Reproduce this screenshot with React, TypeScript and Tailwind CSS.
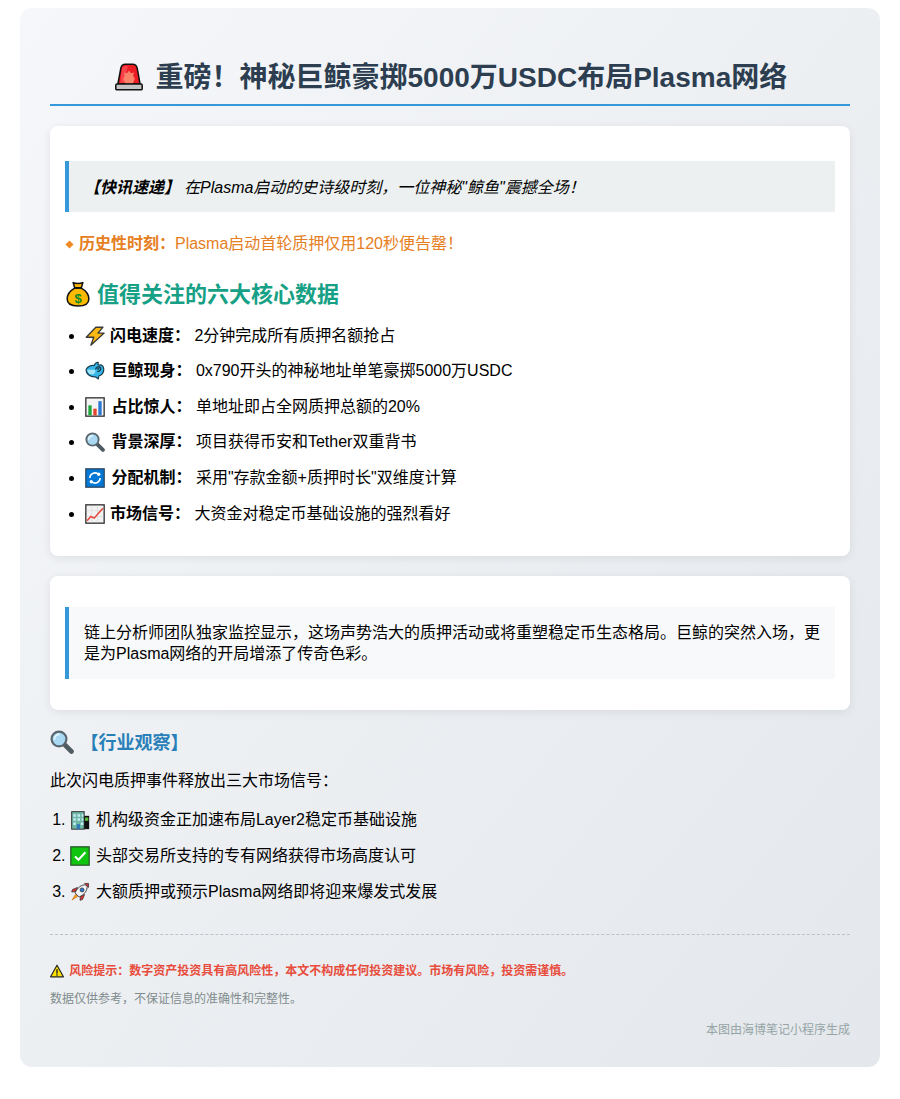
type IconProps = { className: string }

const box = 'inline-block'

function Siren({ className }: IconProps) {
  return (
    <svg viewBox="0 0 24 24" preserveAspectRatio="xMinYMid meet" className={`${box} ${className}`}>
      <path d="M2.5 18 L5 4.5 Q5.5 1 9 1 H15 Q18.5 1 19 4.5 L21.5 18 Z" fill="#ee1c25" stroke="#111" strokeWidth="1.3" />
      <path d="M6 5 Q6.5 2.5 9 2.5 H11 L8 17 H4.5 Z" fill="#f8434b" />
      <path d="M12 6.5 L13.6 8.8 L16.2 8.2 L15.6 11 L17 13.5 L15.3 17.5 H8.7 L7 13.5 L8.4 11 L7.8 8.2 L10.4 8.8 Z" fill="#f9846a" />
      <rect x="0.7" y="18" width="22.6" height="5" rx="1" fill="#c4c4c4" stroke="#111" strokeWidth="1.3" />
    </svg>
  )
}

function MoneyBag({ className }: IconProps) {
  return (
    <svg viewBox="0 0 24 24" preserveAspectRatio="xMinYMid meet" className={`${box} ${className}`}>
      <path d="M7.5 1.5 Q12 3 16.5 1.5 L15 6.5 H9 Z" fill="#f7b500" stroke="#111" strokeWidth="1.4" strokeLinejoin="round" />
      <path d="M9 6.5 H15 C19.5 9 22 13 22 16.5 C22 21 18 23 12 23 C6 23 2 21 2 16.5 C2 13 4.5 9 9 6.5 Z" fill="#fbb900" stroke="#111" strokeWidth="1.4" />
      <rect x="8.5" y="5.6" width="7" height="1.6" fill="#111" />
      <text x="12" y="20" textAnchor="middle" fontSize="12" fontWeight="700" fill="#0a8a2a" fontFamily="Liberation Sans, sans-serif">$</text>
    </svg>
  )
}

function Bolt({ className }: IconProps) {
  return (
    <svg viewBox="0 0 24 24" preserveAspectRatio="xMinYMid meet" className={`${box} ${className}`}>
      <path d="M13 1.5 L21.5 1.5 L15.5 8.5 L23 8.5 L7 23 L10.5 13.5 L1.5 13.5 Z" fill="#fcb813" stroke="#3a3a3a" strokeWidth="1.6" strokeLinejoin="round" />
    </svg>
  )
}

function Whale({ className }: IconProps) {
  return (
    <svg viewBox="0 0 24 24" preserveAspectRatio="xMinYMid meet" className={`${box} ${className}`}>
      <path d="M1.5 10 C3 6 8 5 11 5.5 C12 3 14 1 16 2 C15 3.5 15.5 4.5 17 5 C20 4 22.5 6 22.5 10 C22.5 14 20 17 16.5 18 L16 21.5 L12.5 19 C6.5 19.5 1 16 1.5 10 Z" fill="#35b8e8" stroke="#1d3f52" strokeWidth="1.5" strokeLinejoin="round" />
      <path d="M2.5 10.5 H12 C14 14 10 17 7 16 C4.5 15.5 3 13 2.5 10.5 Z" fill="#a5e4f7" />
      <path d="M13 9.5 C13.5 7 17 6 18.5 8 C19.5 10 18 12.5 15.5 12.5" fill="none" stroke="#1d3f52" strokeWidth="1.8" strokeLinecap="round" />
      <circle cx="15.8" cy="9.2" r="1.2" fill="#1d3f52" />
    </svg>
  )
}

function BarChart({ className }: IconProps) {
  return (
    <svg viewBox="0 0 24 24" preserveAspectRatio="xMinYMid meet" className={`${box} ${className}`}>
      <rect x="1" y="1" width="22" height="22" fill="#f4f4f4" stroke="#333" strokeWidth="1.6" />
      <rect x="4" y="10" width="4" height="12" fill="#1ea83c" />
      <rect x="10" y="14" width="4" height="8" fill="#e8432e" />
      <rect x="16" y="5" width="4" height="17" fill="#2a78d2" />
    </svg>
  )
}

function Magnifier({ className }: IconProps) {
  return (
    <svg viewBox="0 0 24 24" preserveAspectRatio="xMinYMid meet" className={`${box} ${className}`}>
      <path d="M14.5 14.5 L21.5 21.5" stroke="#4f5b62" strokeWidth="4.6" strokeLinecap="round" />
      <circle cx="9" cy="9" r="7.4" fill="#a9d8f2" stroke="#59666e" strokeWidth="2.2" />
      <path d="M4.5 9 A4.6 4.6 0 0 1 9 4.5" fill="none" stroke="#e4f4fd" strokeWidth="1.8" strokeLinecap="round" />
    </svg>
  )
}

function Cycle({ className }: IconProps) {
  return (
    <svg viewBox="0 0 24 24" preserveAspectRatio="xMinYMid meet" className={`${box} ${className}`}>
      <rect x="1" y="1" width="22" height="22" fill="#0078d7" stroke="#2f4a63" strokeWidth="1.6" />
      <path d="M5.8 12 A6.2 6.2 0 0 1 15.5 7" fill="none" stroke="#fff" strokeWidth="1.8" />
      <path d="M18.2 12 A6.2 6.2 0 0 1 8.5 17" fill="none" stroke="#fff" strokeWidth="1.8" />
      <circle cx="16.5" cy="7.5" r="2" fill="#fff" />
      <circle cx="7.5" cy="16.5" r="2" fill="#fff" />
    </svg>
  )
}

function LineChart({ className }: IconProps) {
  return (
    <svg viewBox="0 0 24 24" preserveAspectRatio="xMinYMid meet" className={`${box} ${className}`}>
      <rect x="1" y="1" width="22" height="22" fill="#f4f3f3" stroke="#333" strokeWidth="1.6" />
      <path d="M8 2 V22 M15 2 V22 M2 8 H22 M2 15 H22" stroke="#dcdcdc" strokeWidth="1" />
      <path d="M2.5 20 L7 15 L11 17 L21.5 5" fill="none" stroke="#e4473a" strokeWidth="1.8" />
    </svg>
  )
}

function Office({ className }: IconProps) {
  return (
    <svg viewBox="0 0 24 24" preserveAspectRatio="xMinYMid meet" className={`${box} ${className}`}>
      <rect x="2" y="2" width="15" height="21" fill="#6fb8a6" stroke="#333" strokeWidth="1.2" />
      <rect x="17" y="7" width="6" height="16" fill="#111" />
      <rect x="18" y="9" width="4" height="4" fill="#5dbd3c" />
      <path d="M4 5 H7 V8 H4 Z M9 5 H12 V8 H9 Z M14 5 H16 V8 H14 Z M4 10 H7 V13 H4 Z M9 10 H12 V13 H9 Z M14 10 H16 V13 H14 Z" fill="#c5ecf7" />
      <path d="M4 15 H7 V18 H4 Z M13 15 H16 V18 H13 Z" fill="#c5ecf7" />
      <rect x="8" y="17" width="4" height="6" fill="#3079b8" />
    </svg>
  )
}

function Check({ className }: IconProps) {
  return (
    <svg viewBox="0 0 24 24" preserveAspectRatio="xMinYMid meet" className={`${box} ${className}`}>
      <rect x="1" y="1" width="22" height="22" fill="#0fc50f" stroke="#2d5a2d" strokeWidth="1.6" />
      <path d="M6 12.5 L10.2 16.5 L18.5 7.5" fill="none" stroke="#fff" strokeWidth="2.4" />
    </svg>
  )
}

function Rocket({ className }: IconProps) {
  return (
    <svg viewBox="0 0 24 24" preserveAspectRatio="xMinYMid meet" className={`${box} ${className}`}>
      <path d="M6.5 15 L2.5 21.5 L9 17.5 Z" fill="#f6a019" stroke="#c46a10" strokeWidth="0.8" />
      <path d="M9 6.5 L3 9 L2 12 L7 11.5 Z" fill="#d93030" stroke="#333" strokeWidth="0.9" />
      <path d="M17.5 15 L15 21 L12 22 L12.5 17 Z" fill="#d93030" stroke="#333" strokeWidth="0.9" />
      <path d="M6 13 C9 6.5 14 3 19 3.5 L20.5 5 C21 10 17.5 15 11 18 Z" fill="#f5f5f5" stroke="#333" strokeWidth="1.1" />
      <path d="M17.5 1.7 L22.3 1.7 L22.3 6.5 L20.7 5 L19 3.3 Z" fill="#d93030" stroke="#333" strokeWidth="0.9" />
      <circle cx="14.5" cy="9.5" r="2.4" fill="#2b78d2" stroke="#333" strokeWidth="0.9" />
    </svg>
  )
}

function Warning({ className }: IconProps) {
  return (
    <svg viewBox="0 0 24 24" preserveAspectRatio="xMinYMid meet" className={`${box} ${className}`}>
      <path d="M12 2 L23 22 H1 Z" fill="#fde100" stroke="#222" strokeWidth="2" strokeLinejoin="round" />
      <rect x="10.8" y="9" width="2.4" height="7.5" fill="#222" />
      <rect x="10.8" y="17.6" width="2.4" height="2.4" fill="#222" />
    </svg>
  )
}

const rowIcon = 'h-[20px] align-[-5px]'

const rows = [
  { icon: <Bolt className={`${rowIcon} w-[20.5px]`} />, label: '闪电速度：', text: '2分钟完成所有质押名额抢占' },
  { icon: <Whale className={`${rowIcon} w-[22px]`} />, label: '巨鲸现身：', text: '0x790开头的神秘地址单笔豪掷5000万USDC' },
  { icon: <BarChart className={`${rowIcon} w-[22px]`} />, label: '占比惊人：', text: '单地址即占全网质押总额的20%' },
  { icon: <Magnifier className={`${rowIcon} w-[22px]`} />, label: '背景深厚：', text: '项目获得币安和Tether双重背书' },
  { icon: <Cycle className={`${rowIcon} w-[22px]`} />, label: '分配机制：', text: '采用"存款金额+质押时长"双维度计算' },
  { icon: <LineChart className={`${rowIcon} w-[20.5px]`} />, label: '市场信号：', text: '大资金对稳定币基础设施的强烈看好' },
]

const signals = [
  { icon: <Office className={`${rowIcon} w-[21.5px]`} />, text: '机构级资金正加速布局Layer2稳定币基础设施' },
  { icon: <Check className={`${rowIcon} w-[21.5px]`} />, text: '头部交易所支持的专有网络获得市场高度认可' },
  { icon: <Rocket className={`${rowIcon} w-[21.5px]`} />, text: '大额质押或预示Plasma网络即将迎来爆发式发展' },
]

export default function App() {
  return (
    <div className="bg-white pt-2 pb-8 px-5 font-['Liberation_Sans','Noto_Sans_CJK_SC',sans-serif] text-[16px] text-black">
      <div className="rounded-xl bg-gradient-to-br from-[#f5f7fa] to-[#e4e7eb] px-[30px] pt-[50px] pb-[30px] h-[1059px]">
        <h1 className="h-[48px] border-b-2 border-[#3498db] pl-[2px] text-center text-[28px] leading-[40px] font-bold text-[#2c3e50]">
          <Siren className="h-[28px] w-[33px] align-[-4px]" /> 重磅！神秘巨鲸豪掷5000万USDC布局Plasma网络
        </h1>

        <div className="mt-5 h-[430px] rounded-lg bg-white px-[15px] pt-[35px] shadow-[0_2px_10px_rgba(0,0,0,0.08)]">
          <div className="flex h-[51px] items-center border-l-4 border-[#3498db] bg-[#ecf0f1] pt-[3px] pl-4 italic">
            <strong className="-ml-[1px]">【快讯速递】</strong>
            <span className="ml-1">在Plasma启动的史诗级时刻，一位神秘"鲸鱼"震撼全场！</span>
          </div>
          <p className="mt-[21px] h-[24px] leading-[22px] text-[#e67e22]">
            <span className="font-bold">
              <svg viewBox="0 0 10 10" preserveAspectRatio="xMinYMid meet" className="inline-block h-[9px] w-[9.5px] align-[0px]">
                <path d="M5 0.5 L9.5 5 L5 9.5 L0.5 5 Z" fill="#f08a24" />
              </svg>{' '}
              历史性时刻：
            </span>
            Plasma启动首轮质押仅用120秒便告罄！
          </p>
          <h2 className="mt-[22px] text-[22px] leading-[32px] font-bold text-[#16a085]">
            <MoneyBag className="h-[26px] w-[26px] align-[-5px]" /> 值得关注的六大核心数据
          </h2>
          <ul className="mt-[6.6px] list-disc pl-5">
            {rows.map((r) => (
              <li key={r.label} className="h-[35.6px] leading-[35px]">
                {r.icon} <strong>{r.label}</strong> {r.text}
              </li>
            ))}
          </ul>
        </div>

        <div className="mt-5 h-[134px] rounded-lg bg-white px-[15px] pt-[31px] shadow-[0_2px_10px_rgba(0,0,0,0.08)]">
          <div className="border-l-4 border-[#3498db] bg-[#f8f9fa] py-[15px] pr-[15px] pl-[15px] leading-[21px]">
            链上分析师团队独家监控显示，这场声势浩大的质押活动或将重塑稳定币生态格局。巨鲸的突然入场，更是为Plasma网络的开局增添了传奇色彩。
          </div>
        </div>

        <h3 className="mt-[20px] text-[18px] leading-[26px] font-bold text-[#2980b9]">
          <Magnifier className="h-[24px] w-[25.5px] align-[-5px]" /> 【行业观察】
        </h3>
        <p className="mt-[14px] leading-[22px]">此次闪电质押事件释放出三大市场信号：</p>
        <ol className="mt-[10px] list-decimal pl-5">
          {signals.map((s) => (
            <li key={s.text} className="h-[36px] leading-[36px]">
              {s.icon} {s.text}
            </li>
          ))}
        </ol>

        <div className="mt-[24px] border-t border-dashed border-[#bdc3c7] pt-[27px] text-[12px] leading-[18px]">
          <p className="font-bold text-[#e74c3c]">
            <Warning className="h-[14px] w-[16px] align-[-3px]" /> 风险提示：数字资产投资具有高风险性，本文不构成任何投资建议。市场有风险，投资需谨慎。
          </p>
          <p className="mt-[10px] text-[#7f8c8d]">数据仅供参考，不保证信息的准确性和完整性。</p>
          <p className="mt-[13px] text-right text-[#95a5a6]">本图由海博笔记小程序生成</p>
        </div>
      </div>
    </div>
  )
}
